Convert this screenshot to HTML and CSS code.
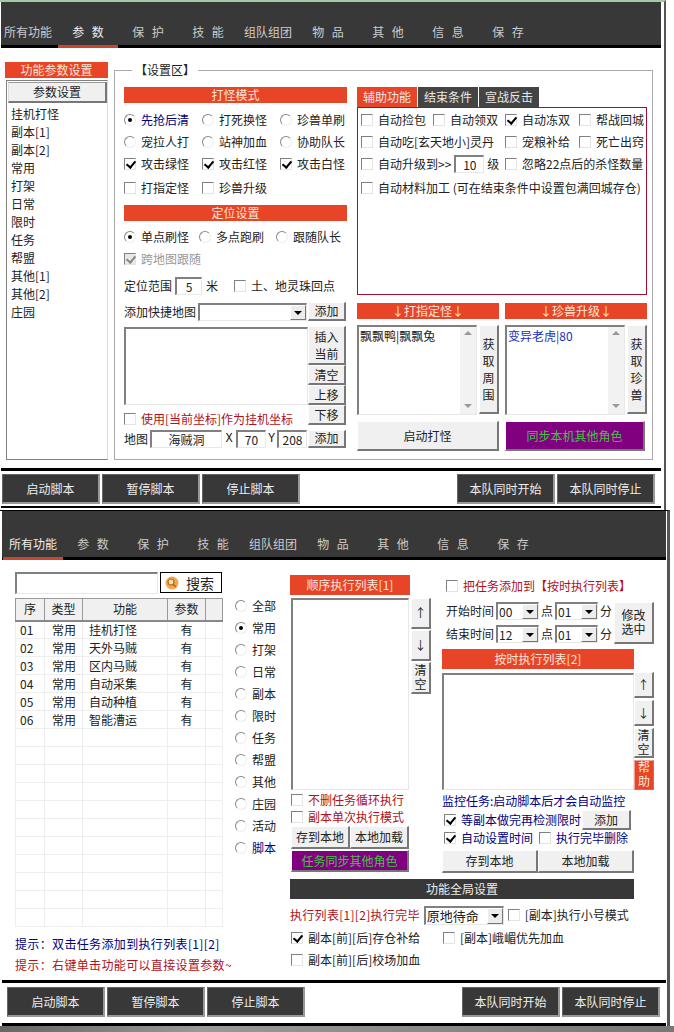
FILE: index.html
```html
<!DOCTYPE html>
<html lang="zh-CN">
<head>
    <meta charset="UTF-8">
    <meta name="viewport" content="width=device-width, initial-scale=1.0">
    <title>脚本设置</title>
    <link rel="stylesheet" href="styles.css">
</head>
<body>
    <!-- first window: parameter page -->
    <div class="frame frame-one">
        <div class="win win-one">
            <div class="tabs tabs-one">
                <div class="tab">所有功能</div>
                <div class="tab active">参 数</div>
                <div class="tab">保 护</div>
                <div class="tab">技 能</div>
                <div class="tab">组队组团</div>
                <div class="tab">物 品</div>
                <div class="tab">其 他</div>
                <div class="tab">信 息</div>
                <div class="tab">保 存</div>
            </div>
            <div class="main main-one">
                <div class="side">
                    <div class="bar side-title">功能参数设置</div>
                    <div class="side-list">
                        <div class="btn side-btn">参数设置</div>
                        <div class="side-items">
                            <div>挂机打怪</div>
                            <div>副本[1]</div>
                            <div>副本[2]</div>
                            <div>常用</div>
                            <div>打架</div>
                            <div>日常</div>
                            <div>限时</div>
                            <div>任务</div>
                            <div>帮盟</div>
                            <div>其他[1]</div>
                            <div>其他[2]</div>
                            <div>庄园</div>
                        </div>
                    </div>
                </div>
                <fieldset class="group">
                    <legend>【设置区】</legend>
                    <div class="group-body">
                        <div class="left-col">
                            <div class="bar bar-16">打怪模式</div>
                            <div class="opts">
                                <div class="opt navy"><i class="rb on"></i><span>先抢后清</span></div>
                                <div class="opt"><i class="rb"></i><span>打死换怪</span></div>
                                <div class="opt"><i class="rb"></i><span>珍兽单刷</span></div>
                                <div class="opt"><i class="rb"></i><span>宠拉人打</span></div>
                                <div class="opt"><i class="rb"></i><span>站神加血</span></div>
                                <div class="opt"><i class="rb"></i><span>协助队长</span></div>
                                <div class="opt"><i class="cb on"></i><span>攻击绿怪</span></div>
                                <div class="opt"><i class="cb on"></i><span>攻击红怪</span></div>
                                <div class="opt"><i class="cb on"></i><span>攻击白怪</span></div>
                                <div class="opt opt-low"><i class="cb"></i><span>打指定怪</span></div>
                                <div class="opt opt-low"><i class="cb"></i><span>珍兽升级</span></div>
                            </div>
                            <div class="bar bar-16 bar-locate">定位设置</div>
                            <div class="locate-modes">
                                <div class="opt"><i class="rb on"></i><span>单点刷怪</span></div>
                                <div class="opt"><i class="rb"></i><span>多点跑刷</span></div>
                                <div class="opt"><i class="rb"></i><span>跟随队长</span></div>
                            </div>
                            <div class="opt follow"><i class="cb on off"></i><span>跨地图跟随</span></div>
                            <div class="line range-line">
                                <span>定位范围</span>
                                <div class="box range-box">5</div>
                                <span class="range-unit">米</span>
                                <div class="opt"><i class="cb"></i><span>土、地灵珠回点</span></div>
                            </div>
                            <div class="line map-add">
                                <span>添加快捷地图</span>
                                <div class="combo map-combo"><span></span><b class="arrow"></b></div>
                                <div class="btn side-small">添加</div>
                            </div>
                            <div class="coords">
                                <div class="coords-left">
                                    <div class="box coords-list"></div>
                                    <div class="opt red"><i class="cb"></i><span>使用[当前坐标]作为挂机坐标</span></div>
                                </div>
                                <div class="coords-btns">
                                    <div class="btn insert-btn">插入<br>当前</div>
                                    <div class="btn">清空</div>
                                    <div class="btn">上移</div>
                                    <div class="btn">下移</div>
                                </div>
                            </div>
                            <div class="line map-line">
                                <span>地图</span>
                                <div class="box map-name">海贼洞</div>
                                <span class="axis">X</span>
                                <div class="box map-num">70</div>
                                <span class="axis axis-y">Y</span>
                                <div class="box map-num">208</div>
                                <div class="btn side-small">添加</div>
                            </div>
                        </div>
                        <div class="right-col">
                            <div class="sub-tabs">
                                <div class="sub-tab active">辅助功能</div>
                                <div class="sub-tab">结束条件</div>
                                <div class="sub-tab">宣战反击</div>
                            </div>
                            <div class="sub-panel">
                                <div class="opt"><i class="cb"></i><span>自动捡包</span></div>
                                <div class="opt"><i class="cb"></i><span>自动领双</span></div>
                                <div class="opt"><i class="cb on"></i><span>自动冻双</span></div>
                                <div class="opt"><i class="cb"></i><span>帮战回城</span></div>
                                <div class="opt span-2"><i class="cb"></i><span>自动吃[玄天地小]灵丹</span></div>
                                <div class="opt"><i class="cb"></i><span>宠粮补给</span></div>
                                <div class="opt"><i class="cb"></i><span>死亡出窍</span></div>
                                <div class="opt span-2"><i class="cb"></i><span>自动升级到&gt;&gt;</span><div class="box level-box">10</div><span class="level-unit">级</span></div>
                                <div class="opt span-2"><i class="cb"></i><span>忽略22点后的杀怪数量</span></div>
                                <div class="opt span-4 opt-low"><i class="cb"></i><span>自动材料加工 (可在结束条件中设置包满回城存仓)</span></div>
                            </div>
                            <div class="pairs">
                                <div class="pair">
                                    <div class="bar bar-16">↓打指定怪↓</div>
                                    <div class="pair-row">
                                        <div class="box pair-list">
                                            <span class="pair-text">飘飘鸭|飘飘兔</span>
                                            <div class="scroll"><b class="up"></b><b class="down"></b></div>
                                        </div>
                                        <div class="btn tall-btn">获取周围</div>
                                    </div>
                                    <div class="btn big-btn">启动打怪</div>
                                </div>
                                <div class="pair">
                                    <div class="bar bar-16">↓珍兽升级↓</div>
                                    <div class="pair-row">
                                        <div class="box pair-list">
                                            <span class="pair-text blue">变异老虎|80</span>
                                            <div class="scroll"><b class="up"></b><b class="down"></b></div>
                                        </div>
                                        <div class="btn tall-btn">获取珍兽</div>
                                    </div>
                                    <div class="btn big-btn purple sync-one">同步本机其他角色</div>
                                </div>
                            </div>
                        </div>
                    </div>
                </fieldset>
            </div>
            <div class="actions actions-one">
                <div class="act">启动脚本</div>
                <div class="act">暂停脚本</div>
                <div class="act">停止脚本</div>
                <div class="act act-team push">本队同时开始</div>
                <div class="act act-team">本队同时停止</div>
            </div>
        </div>
    </div>

    <!-- second window: all functions page -->
    <div class="frame frame-two">
        <div class="win win-two">
            <div class="tabs tabs-two">
                <div class="tab active">所有功能</div>
                <div class="tab">参 数</div>
                <div class="tab">保 护</div>
                <div class="tab">技 能</div>
                <div class="tab">组队组团</div>
                <div class="tab">物 品</div>
                <div class="tab">其 他</div>
                <div class="tab">信 息</div>
                <div class="tab">保 存</div>
            </div>
            <div class="main main-two">
                <div class="func-col">
                    <div class="search">
                        <div class="box search-box"></div>
                        <div class="search-btn">
                            <svg width="14" height="14" viewBox="0 0 14 14">
                                <circle cx="7" cy="7" r="6.5" fill="#f0a850"/>
                                <circle cx="6" cy="6" r="3" fill="#fbe3b8" stroke="#b8651c" stroke-width="1.2"/>
                                <path d="M8.2 8.2L11 11" stroke="#b8651c" stroke-width="1.6"/>
                            </svg>
                            <span>搜索</span>
                        </div>
                    </div>
                    <table class="func-table">
                        <colgroup>
                            <col class="c-no"><col class="c-type"><col class="c-name"><col class="c-arg"><col class="c-end">
                        </colgroup>
                        <thead>
                            <tr><th>序</th><th>类型</th><th>功能</th><th>参数</th><th></th></tr>
                        </thead>
                        <tbody>
                            <tr><td>01</td><td>常用</td><td>挂机打怪</td><td>有</td><td></td></tr>
                            <tr><td>02</td><td>常用</td><td>天外马贼</td><td>有</td><td></td></tr>
                            <tr><td>03</td><td>常用</td><td>区内马贼</td><td>有</td><td></td></tr>
                            <tr><td>04</td><td>常用</td><td>自动采集</td><td>有</td><td></td></tr>
                            <tr><td>05</td><td>常用</td><td>自动种植</td><td>有</td><td></td></tr>
                            <tr><td>06</td><td>常用</td><td>智能漕运</td><td>有</td><td></td></tr>
                            <tr><td></td><td></td><td></td><td></td><td></td></tr>
                            <tr><td></td><td></td><td></td><td></td><td></td></tr>
                            <tr><td></td><td></td><td></td><td></td><td></td></tr>
                            <tr><td></td><td></td><td></td><td></td><td></td></tr>
                            <tr><td></td><td></td><td></td><td></td><td></td></tr>
                            <tr><td></td><td></td><td></td><td></td><td></td></tr>
                            <tr><td></td><td></td><td></td><td></td><td></td></tr>
                            <tr><td></td><td></td><td></td><td></td><td></td></tr>
                            <tr><td></td><td></td><td></td><td></td><td></td></tr>
                            <tr><td></td><td></td><td></td><td></td><td></td></tr>
                            <tr><td></td><td></td><td></td><td></td><td></td></tr>
                        </tbody>
                    </table>
                    <div class="hint navy">提示：双击任务添加到执行列表[1][2]</div>
                    <div class="hint red">提示：右键单击功能可以直接设置参数~</div>
                </div>
                <div class="filter-col">
                    <div class="opt"><i class="rb"></i><span>全部</span></div>
                    <div class="opt"><i class="rb on"></i><span>常用</span></div>
                    <div class="opt"><i class="rb"></i><span>打架</span></div>
                    <div class="opt"><i class="rb"></i><span>日常</span></div>
                    <div class="opt"><i class="rb"></i><span>副本</span></div>
                    <div class="opt"><i class="rb"></i><span>限时</span></div>
                    <div class="opt"><i class="rb"></i><span>任务</span></div>
                    <div class="opt"><i class="rb"></i><span>帮盟</span></div>
                    <div class="opt"><i class="rb"></i><span>其他</span></div>
                    <div class="opt"><i class="rb"></i><span>庄园</span></div>
                    <div class="opt"><i class="rb"></i><span>活动</span></div>
                    <div class="opt navy"><i class="rb"></i><span>脚本</span></div>
                </div>
                <div class="run-col">
                    <div class="run-top">
                        <div class="seq-col">
                            <div class="bar bar-20 seq-title">顺序执行列表[1]</div>
                            <div class="seq-row">
                                <div class="box seq-list"></div>
                                <div class="seq-btns">
                                    <div class="btn arrow-btn">↑</div>
                                    <div class="btn arrow-btn">↓</div>
                                    <div class="btn stack-btn">清<br>空</div>
                                </div>
                            </div>
                            <div class="opt red seq-opt"><i class="cb"></i><span>不删任务循环执行</span></div>
                            <div class="opt red seq-opt"><i class="cb"></i><span>副本单次执行模式</span></div>
                            <div class="two-btns seq-save">
                                <div class="btn">存到本地</div>
                                <div class="btn">本地加载</div>
                            </div>
                            <div class="btn purple seq-sync">任务同步其他角色</div>
                        </div>
                        <div class="timer-col">
                            <div class="opt red timer-add"><i class="cb"></i><span>把任务添加到【按时执行列表】</span></div>
                            <div class="timer-set">
                                <div class="timer-rows">
                                    <div class="line timer-line">
                                        <span>开始时间</span>
                                        <div class="combo time-combo"><span>00</span><b class="arrow"></b></div>
                                        <span>点</span>
                                        <div class="combo time-combo"><span>01</span><b class="arrow"></b></div>
                                        <span>分</span>
                                    </div>
                                    <div class="line timer-line">
                                        <span>结束时间</span>
                                        <div class="combo time-combo"><span>12</span><b class="arrow"></b></div>
                                        <span>点</span>
                                        <div class="combo time-combo"><span>01</span><b class="arrow"></b></div>
                                        <span>分</span>
                                    </div>
                                </div>
                                <div class="btn edit-btn">修改<br>选中</div>
                            </div>
                            <div class="bar bar-20 timer-title">按时执行列表[2]</div>
                            <div class="timer-row">
                                <div class="box timer-list"></div>
                                <div class="timer-btns">
                                    <div class="btn arrow-btn">↑</div>
                                    <div class="btn arrow-btn">↓</div>
                                    <div class="btn stack-btn">清<br>空</div>
                                    <div class="btn stack-btn help-btn">帮<br>助</div>
                                </div>
                            </div>
                            <div class="navy monitor">监控任务:启动脚本后才会自动监控</div>
                            <div class="line navy wait-line">
                                <div class="opt"><i class="cb on"></i><span>等副本做完再检测限时</span></div>
                                <div class="btn wait-btn">添加</div>
                            </div>
                            <div class="line navy auto-line">
                                <div class="opt"><i class="cb on"></i><span>自动设置时间</span></div>
                                <div class="opt"><i class="cb"></i><span>执行完毕删除</span></div>
                            </div>
                            <div class="two-btns timer-save">
                                <div class="btn">存到本地</div>
                                <div class="btn">本地加载</div>
                            </div>
                        </div>
                    </div>
                    <div class="bar bar-20 global-title">功能全局设置</div>
                    <div class="line global-line">
                        <span class="red">执行列表[1][2]执行完毕</span>
                        <div class="combo global-combo"><span>原地待命</span><b class="arrow"></b></div>
                        <div class="opt"><i class="cb"></i><span>[副本]执行小号模式</span></div>
                    </div>
                    <div class="line global-opts">
                        <div class="opt"><i class="cb on"></i><span>副本[前][后]存仓补给</span></div>
                        <div class="opt"><i class="cb"></i><span>[副本]峨嵋优先加血</span></div>
                    </div>
                    <div class="line global-opts">
                        <div class="opt"><i class="cb"></i><span>副本[前][后]校场加血</span></div>
                    </div>
                </div>
            </div>
            <div class="actions actions-two">
                <div class="act">启动脚本</div>
                <div class="act">暂停脚本</div>
                <div class="act">停止脚本</div>
                <div class="act act-team push">本队同时开始</div>
                <div class="act act-team">本队同时停止</div>
            </div>
        </div>
    </div>
    <div class="desk"></div>
</body>
</html>
```

FILE: styles.css
```css
* {
    margin: 0;
    padding: 0;
    box-sizing: border-box;
}

body {
    width: 674px;
    height: 1032px;
    overflow: hidden;
    background: white;
    font-family: "Noto Sans CJK SC", "Liberation Sans", sans-serif;
    font-size: 12px;
    line-height: 14px;
    color: #222;
}

i {
    font-style: normal;
}

.navy { color: #000080; }
.red { color: #b01020; }
.blue { color: #2030c0; }

/* windows */
.frame-one {
    width: 666px;
    height: 510px;
    border-right: 2px solid #555;
    border-top: 2px solid #a5c8a8;
}

.win-one {
    width: 660px;
    margin-left: 1px;
    border-bottom: 2px solid black;
}

.frame-two {
    width: 670px;
    height: 516px;
    border-right: 3px solid #555;
    border-top: 1px solid black;
}

.win-two {
    width: 664px;
    margin-left: 2px;
    border-bottom: 3px solid black;
}

.desk {
    height: 6px;
    background: linear-gradient(90deg, #666, #999 30%, #777);
}

/* top tabs */
.tabs {
    display: flex;
    align-items: flex-end;
    background: #383838;
    border-bottom: 3px solid black;
    color: #ccc;
}

.tabs-one {
    height: 46px;
    padding-left: 0;
}

.tabs-one .tab:first-child {
    width: 57px;
    padding-right: 3px;
}

.tabs-two {
    height: 49px;
    padding-left: 1px;
}

.tab {
    width: 60px;
    height: 23px;
    margin-bottom: -3px;
    border-bottom: 3px solid transparent;
    text-align: center;
    word-spacing: 5px;
    white-space: nowrap;
    flex: none;
}

.tab.active {
    border-bottom-color: #c8452f;
    color: #eee;
}

.main {
    display: flex;
    border-bottom: 3px solid black;
}

.main-one {
    height: 423px;
    padding: 14px 0 0 4px;
}

.main-two {
    height: 423px;
    padding: 12px 0 0 13px;
}

/* shared controls */
.bar {
    background: #e84528;
    color: #f8e6d8;
    text-align: center;
}

.bar-16 {
    height: 16px;
    line-height: 16px;
}

.bar-20 {
    height: 20px;
    line-height: 19px;
}

.btn {
    background: #f0f0f0;
    border: 1px solid;
    border-color: white #777 #777 white;
    border-width: 1px 2px 2px 1px;
    display: flex;
    align-items: center;
    justify-content: center;
    text-align: center;
}

.box {
    background: white;
    border: 1px solid;
    border-color: #808080 #e8e8e8 #e8e8e8 #808080;
    border-width: 2px 1px 1px 2px;
}

.line {
    display: flex;
    align-items: center;
    white-space: nowrap;
}

.opt {
    display: flex;
    align-items: center;
    gap: 5px;
    white-space: nowrap;
}

.cb, .rb {
    display: block;
    position: relative;
    flex: none;
    width: 12px;
    height: 12px;
    background: white;
}

.cb {
    border: 1px solid;
    border-color: #808080 #e4e4e4 #e4e4e4 #808080;
}

.cb.on::after {
    content: "";
    position: absolute;
    left: 3px;
    top: 0;
    width: 4px;
    height: 7px;
    border: solid black;
    border-width: 0 2px 2px 0;
    transform: rotate(40deg);
}

.cb.off {
    background: #e8e8e8;
}

.cb.off::after {
    border-color: #888;
}

.rb {
    border-radius: 50%;
    border: 1px solid;
    border-color: #888 #eee #eee #888;
}

.rb.on::after {
    content: "";
    position: absolute;
    left: 3px;
    top: 3px;
    width: 4px;
    height: 4px;
    border-radius: 50%;
    background: black;
}

.combo {
    display: flex;
    align-items: center;
    justify-content: space-between;
    background: white;
    border: 1px solid;
    border-color: #808080 #e8e8e8 #e8e8e8 #808080;
    border-width: 2px 1px 1px 2px;
    padding-left: 1px;
}

.arrow {
    position: relative;
    width: 16px;
    height: 100%;
    background: #ececec;
    border: 1px solid;
    border-color: white #777 #777 white;
    flex: none;
}

.arrow::after {
    content: "";
    position: absolute;
    left: 3px;
    top: 5px;
    border: 4px solid transparent;
    border-top: 4px solid black;
    border-bottom: 0;
}

.purple {
    background: #800080;
    color: #45c045;
}

/* first window, left list */
.side {
    width: 103px;
    margin-left: 0;
}

.side-title {
    height: 16px;
    line-height: 16px;
}

.side-list {
    width: 102px;
    height: 380px;
    margin: 2px 0 0 1px;
    border: 1px solid;
    border-color: #808080 #ddd #808080 #808080;
    padding: 1px 0 0 1px;
}

.side-btn {
    width: 99px;
    height: 21px;
    border-width: 1px 2px 2px 1px;
    border-color: #999 #777 #777 #ddd;
}

.side-items {
    margin-top: 2px;
    padding-left: 3px;
}

.side-items div {
    height: 18px;
    line-height: 18px;
}

.group {
    width: 539px;
    height: 397px;
    margin: 1px 0 0 6px;
    padding: 10px 0 0 9px;
    border: 1px solid #aaa;
    min-width: 0;
}

.group legend {
    margin-left: 8px;
    padding: 0 3px;
    height: 14px;
}

.group-body {
    display: flex;
    gap: 10px;
}

.left-col {
    width: 223px;
}

.opts {
    display: grid;
    grid-template-columns: 78px 78px 67px;
    grid-auto-rows: 22px;
    margin-top: 6px;
}

.opt-low {
    padding-top: 4px;
}

.bar-locate {
    margin-top: 8px;
}

.locate-modes {
    display: flex;
    height: 22px;
    margin-top: 5px;
}

.locate-modes .opt:nth-child(1) { width: 75px; }
.locate-modes .opt:nth-child(2) { width: 77px; }

.follow {
    height: 22px;
    color: #999;
}

.range-line {
    height: 18px;
    margin-top: 7px;
}

.range-box {
    width: 27px;
    height: 18px;
    margin-left: 3px;
    text-align: center;
    line-height: 15px;
}

.range-unit {
    margin: 0 16px 0 4px;
}

.map-add {
    height: 19px;
    margin-top: 7px;
}

.map-combo {
    width: 109px;
    height: 18px;
    margin-left: 2px;
}

.side-small {
    width: 38px;
    height: 19px;
    margin-left: 1px;
}

.coords {
    display: flex;
    height: 103px;
    margin-top: 5px;
}

.coords-left {
    width: 184px;
}

.coords-list {
    height: 78px;
    margin-top: 1px;
}

.coords-left .opt {
    height: 28px;
}

.coords-btns {
    width: 38px;
    display: grid;
    grid-template-rows: 39px 20px 20px 20px;
}

.insert-btn {
    line-height: 17px;
}

.map-line {
    height: 19px;
}

.map-name {
    width: 72px;
    height: 18px;
    margin-left: 2px;
    text-align: center;
    line-height: 15px;
}

.axis {
    width: 14px;
    text-align: center;
    font-family: "Liberation Mono", monospace;
}

.axis-y {
    width: 11px;
}

.map-num {
    width: 30px;
    height: 18px;
    text-align: center;
    line-height: 15px;
}

.map-line .side-small {
    height: 18px;
}

/* first window, right column */
.right-col {
    width: 290px;
}

.sub-tabs {
    display: flex;
    gap: 1px;
    height: 20px;
}

.sub-tab {
    width: 60px;
    background: #444;
    color: #e8e8e8;
    text-align: center;
    line-height: 20px;
}

.sub-tab.active {
    background: #e84528;
}

.sub-panel {
    display: grid;
    grid-template-columns: 72px 72px 74px 66px;
    grid-auto-rows: 22px;
    align-content: start;
    height: 188px;
    padding: 1px 0 0 3px;
    border: 1px solid #a01030;
}

.span-2 { grid-column: span 2; }
.span-4 { grid-column: span 4; }

.level-box {
    width: 30px;
    height: 18px;
    margin-left: -2px;
    text-align: center;
    line-height: 15px;
}

.level-unit {
    margin-left: -2px;
}

.pairs {
    display: flex;
    gap: 6px;
    margin-top: 8px;
}

.pair {
    width: 142px;
}

.pair-row {
    display: flex;
    height: 90px;
    margin-top: 6px;
}

.pair-list {
    position: relative;
    width: 120px;
    height: 90px;
    padding: 2px 0 0 1px;
}

.scroll {
    position: absolute;
    right: 0;
    top: 0;
    bottom: 0;
    width: 16px;
    background: #f2f2f2;
}

.scroll b {
    position: absolute;
    left: 4px;
    border: 4px solid transparent;
}

.scroll .up {
    top: 4px;
    border-top: 0;
    border-bottom-color: #999;
}

.scroll .down {
    bottom: 6px;
    border-bottom: 0;
    border-top-color: #999;
}

.tall-btn {
    width: 20px;
    height: 89px;
    margin-left: 2px;
    line-height: 17px;
}

.big-btn {
    height: 30px;
    margin-top: 6px;
}

.sync-one {
    width: 140px;
}

/* bottom buttons */
.actions {
    display: flex;
    gap: 2px;
}

.actions-one {
    height: 35px;
    padding: 3px 6px 0 1px;
}

.actions-two {
    height: 40px;
    padding: 4px 6px 0 5px;
}

.act {
    width: 98px;
    height: 30px;
    background: #383838;
    color: #eee;
    border: 1px solid;
    border-color: #666 #999 #999 #666;
    border-width: 1px 2px 2px 1px;
    display: flex;
    align-items: center;
    justify-content: center;
}

.act-team {
    width: 98px;
}

.push {
    margin-left: auto;
}

/* second window, function table */
.func-col {
    width: 207px;
}

.search {
    display: flex;
    gap: 2px;
    height: 22px;
}

.search-box {
    width: 143px;
    height: 22px;
}

.search-btn {
    display: flex;
    align-items: center;
    gap: 7px;
    width: 62px;
    height: 21px;
    padding-left: 4px;
    background: white;
    border: 1px solid black;
    font-size: 14px;
}

.func-table {
    width: 207px;
    margin-top: 4px;
    border-collapse: collapse;
    table-layout: fixed;
    border: 1px solid #777;
}

.c-no { width: 29px; }
.c-type { width: 38px; }
.c-name { width: 85px; }
.c-arg { width: 38px; }
.c-end { width: 17px; }

.func-table th {
    height: 22px;
    background: #f0f0f0;
    font-weight: normal;
    border: 1px solid #999;
    border-bottom: 2px solid #888;
}

.func-table td {
    height: 18px;
    padding: 0 0 0 4px;
    border: 1px solid #eee;
    white-space: nowrap;
}

.func-table td:nth-child(2) { padding-left: 7px; }
.func-table td:nth-child(3) { padding-left: 6px; }
.func-table td:nth-child(4) {
    padding-left: 0;
    text-align: center;
}

.hint {
    height: 14px;
    margin-top: 10px;
    letter-spacing: 0.35px;
    white-space: nowrap;
}

.func-col .hint.red {
    margin-top: 7px;
}

/* second window, filters */
.filter-col {
    width: 55px;
    margin: 23px 0 0 13px;
}

.filter-col .opt {
    height: 22px;
}

/* second window, execute lists */
.run-col {
    width: 364px;
    padding-top: 3px;
}

.run-top {
    display: flex;
    height: 304px;
}

.seq-col {
    width: 152px;
}

.seq-title {
    width: 120px;
}

.seq-row {
    display: flex;
    gap: 2px;
    margin: 3px 0 0 1px;
}

.seq-list {
    width: 118px;
    height: 192px;
}

.seq-btns {
    width: 20px;
    display: flex;
    flex-direction: column;
    gap: 1px;
}

.arrow-btn {
    height: 31px;
}

.stack-btn, .edit-btn {
    font-family: "Liberation Sans", "Noto Sans CJK SC", sans-serif;
    line-height: 14px;
}

.stack-btn {
    height: 32px;
}

.seq-opt {
    height: 17px;
    margin-left: 1px;
}

.seq-row + .seq-opt {
    margin-top: 1px;
}

.two-btns {
    display: flex;
}

.two-btns .btn {
    flex: 1;
}

.seq-save {
    width: 118px;
    height: 23px;
    margin: 1px 0 0 1px;
}

.seq-sync {
    width: 118px;
    height: 22px;
    margin: 1px 0 0 1px;
}

.timer-col {
    width: 212px;
}

.timer-add {
    height: 16px;
    margin: 3px 0 0 4px;
}

.timer-set {
    display: flex;
    margin-top: 8px;
}

.timer-rows {
    width: 172px;
}

.timer-line {
    height: 18px;
    padding-left: 4px;
    gap: 2px;
    margin-bottom: 5px;
}

.time-combo {
    width: 43px;
    height: 18px;
}

.edit-btn {
    width: 40px;
    height: 42px;
}

.timer-title {
    width: 192px;
    margin-top: 1px;
}

.timer-row {
    display: flex;
    margin-top: 3px;
}

.timer-list {
    width: 192px;
    height: 117px;
    margin-top: 1px;
}

.timer-btns {
    width: 20px;
    display: flex;
    flex-direction: column;
    gap: 2px;
}

.timer-btns .arrow-btn {
    height: 26px;
}

.timer-btns .stack-btn {
    height: 30px;
}

.timer-btns .help-btn {
    background: #e84528;
    color: #f8e6d8;
    border-width: 1px;
    border-color: #f0a090 #888 #888 #f0a090;
}

.monitor {
    margin-top: 4px;
    white-space: nowrap;
}

.wait-line {
    height: 20px;
    padding-left: 2px;
    margin-top: 2px;
}

.wait-btn {
    width: 49px;
    height: 20px;
    margin-left: 1px;
    color: #222;
}

.auto-line {
    height: 16px;
    padding-left: 2px;
    gap: 6px;
}

.timer-save {
    width: 192px;
    height: 23px;
    margin-top: 4px;
}

.global-title {
    width: 344px;
    background: #383838;
    color: #eee;
}

.global-line {
    height: 20px;
    margin-top: 6px;
}

.global-line .red {
    letter-spacing: 0.3px;
}

.global-combo {
    width: 80px;
    height: 19px;
    margin: 0 4px;
    font-size: 13px;
}

.global-opts {
    height: 22px;
    padding-left: 1px;
}

.global-line + .global-opts {
    margin-top: 2px;
}

.global-opts .opt:first-child {
    width: 152px;
}
```
